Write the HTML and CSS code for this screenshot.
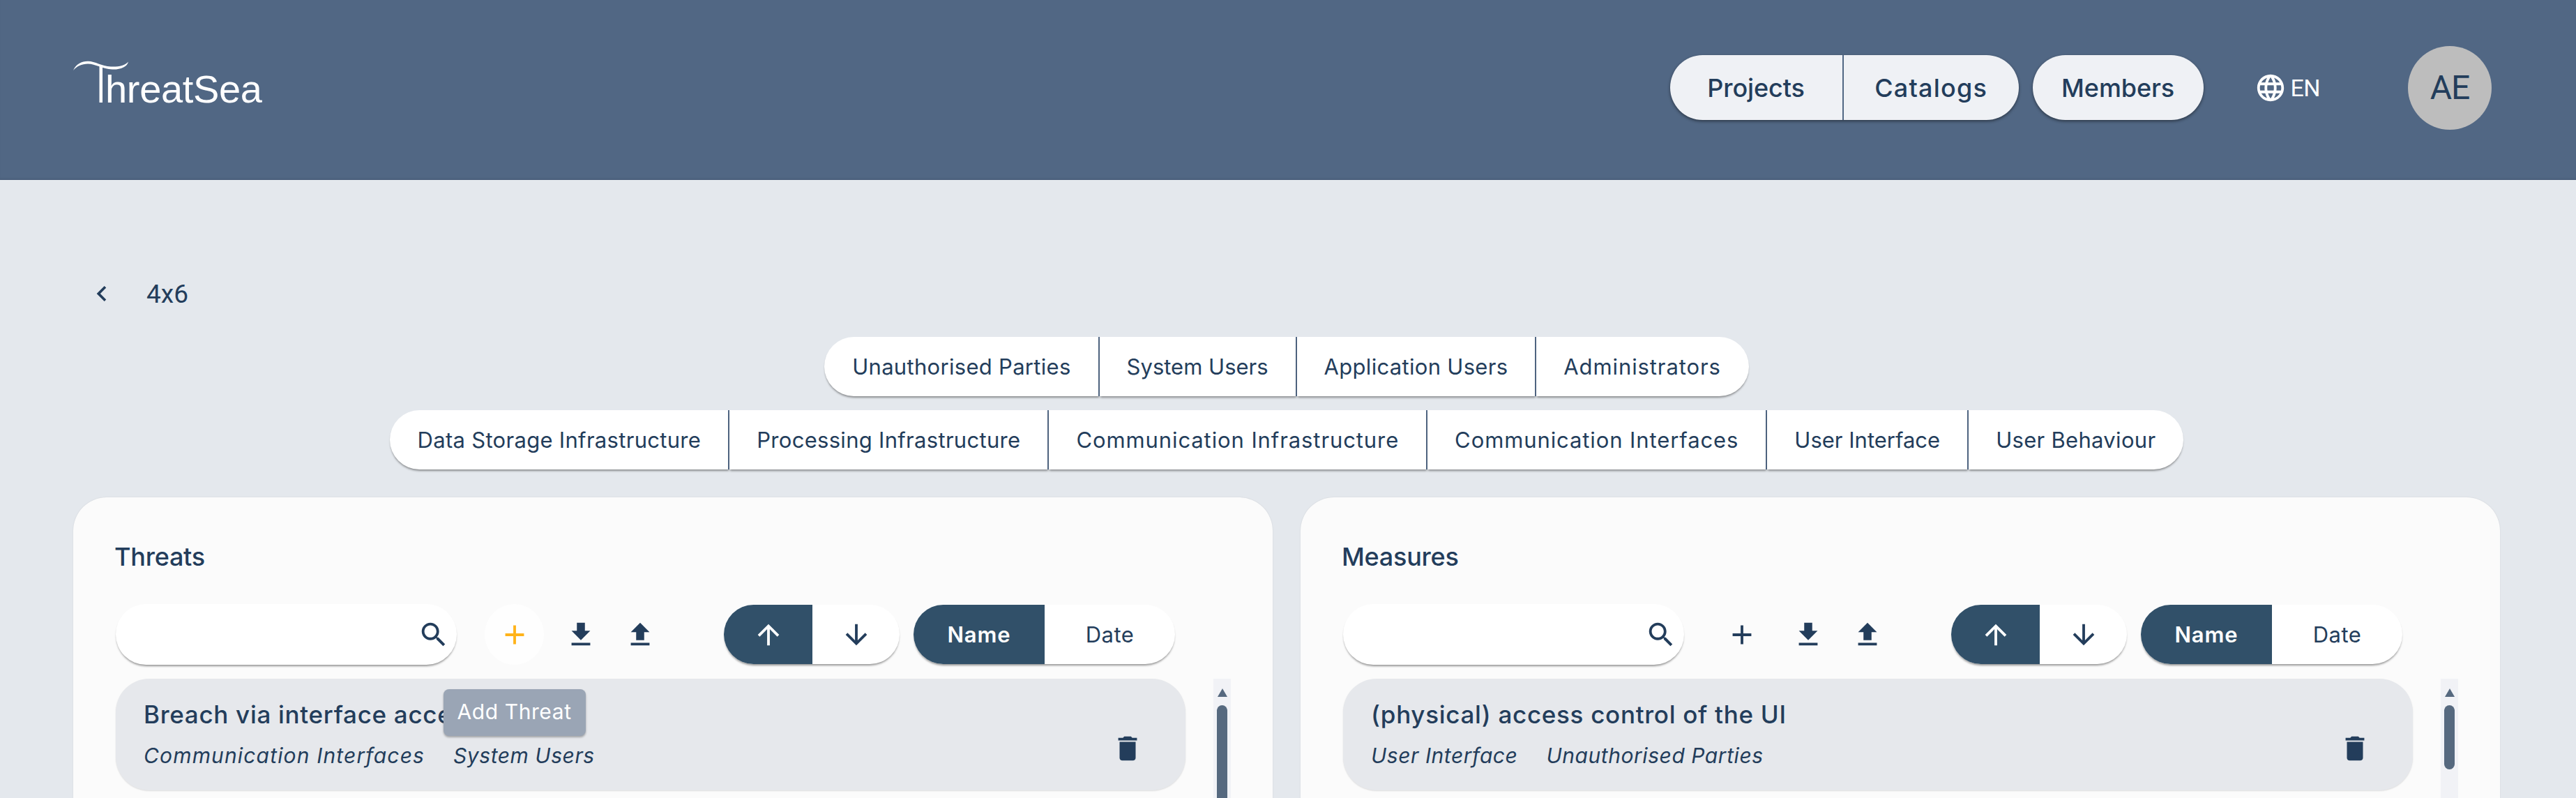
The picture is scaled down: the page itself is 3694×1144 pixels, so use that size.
FILE: index.html
```html
<!DOCTYPE html>
<html lang="en">
<head>
<meta charset="utf-8">
<title>ThreatSea</title>
<link rel="stylesheet" href="styles.css">
</head>
<body>
<svg class="sprite" aria-hidden="true">
  <symbol id="i-search" viewBox="0 0 24 24"><path d="M15.5 14h-.79l-.28-.27C15.41 12.59 16 11.11 16 9.5 16 5.91 13.09 3 9.5 3S3 5.91 3 9.5 5.91 16 9.5 16c1.61 0 3.09-.59 4.23-1.57l.27.28v.79l5 4.99L20.49 19l-4.99-5zm-6 0C7.01 14 5 11.99 5 9.5S7.01 5 9.5 5 14 7.01 14 9.5 11.99 14 9.5 14z"/></symbol>
  <symbol id="i-add" viewBox="0 0 24 24"><path d="M19 13h-6v6h-2v-6H5v-2h6V5h2v6h6v2z"/></symbol>
  <symbol id="i-down" viewBox="0 0 24 24"><path d="M19 9h-4V3H9v6H5l7 7 7-7zM5 18v2h14v-2H5z"/></symbol>
  <symbol id="i-up" viewBox="0 0 24 24"><path d="M9 16h6v-6h4l-7-7-7 7h4zm-4 2h14v2H5z"/></symbol>
  <symbol id="i-arrow-up" viewBox="0 0 24 24"><path d="M4 12l1.41 1.41L11 7.83V20h2V7.83l5.58 5.59L20 12l-8-8-8 8z"/></symbol>
  <symbol id="i-arrow-down" viewBox="0 0 24 24"><path d="M20 12l-1.41-1.41L13 16.17V4h-2v12.17l-5.58-5.59L4 12l8 8 8-8z"/></symbol>
  <symbol id="i-trash" viewBox="0 0 24 24"><path d="M6 19c0 1.1.9 2 2 2h8c1.1 0 2-.9 2-2V7H6v12zM19 4h-3.5l-1-1h-5l-1 1H5v2h14V4z"/></symbol>
  <symbol id="i-chevron" viewBox="0 0 24 24"><path d="M15.41 7.41 14 6l-6 6 6 6 1.41-1.41L10.83 12z"/></symbol>
  <symbol id="i-globe" viewBox="0 0 24 24"><path d="M11.99 2C6.47 2 2 6.48 2 12s4.47 10 9.99 10C17.52 22 22 17.52 22 12S17.52 2 11.99 2zm6.93 6h-2.95c-.32-1.25-.78-2.45-1.38-3.56 1.84.63 3.37 1.91 4.33 3.56zM12 4.04c.83 1.2 1.48 2.53 1.91 3.96h-3.82c.43-1.43 1.08-2.76 1.91-3.96zM4.26 14C4.1 13.36 4 12.69 4 12s.1-1.36.26-2h3.38c-.08.66-.14 1.32-.14 2 0 .68.06 1.34.14 2H4.26zm.82 2h2.95c.32 1.25.78 2.45 1.38 3.56-1.84-.63-3.37-1.9-4.33-3.56zm2.95-8H5.08c.96-1.66 2.49-2.93 4.33-3.56C8.81 5.55 8.35 6.75 8.03 8zM12 19.96c-.83-1.2-1.48-2.53-1.91-3.96h3.82c-.43 1.43-1.08 2.76-1.91 3.96zM14.34 14H9.66c-.09-.66-.16-1.32-.16-2 0-.68.07-1.35.16-2h4.68c.09.65.16 1.32.16 2 0 .68-.07 1.34-.16 2zm.25 5.56c.6-1.11 1.06-2.31 1.38-3.56h2.95c-.96 1.65-2.49 2.93-4.33 3.56zM16.36 14c.08-.66.14-1.32.14-2 0-.68-.06-1.34-.14-2h3.38c.16.64.26 1.31.26 2s-.1 1.36-.26 2h-3.38z"/></symbol>
</svg>

<header class="topbar">
  <svg class="logo" viewBox="0 0 285 76" role="img" aria-label="ThreatSea">
    <path class="logo-mark" d="M0 15C4 6 12 1.8 21 1.8C32 1.8 40 9 54 9.5C65 10 74 8 79 2.5C77 10.5 67 14 56 13.5C42 13 32 5.5 21 5.5C12 5.5 5 9 0 15Z"/>
    <rect class="logo-mark" x="37.5" y="8" width="4.5" height="53"/>
    <text class="logo-text" x="46" y="60.7" textLength="225" lengthAdjust="spacing">hreatSea</text>
  </svg>
  <nav class="topnav">
    <div class="navgroup">
      <a class="navlink navlink-projects">Projects</a>
      <a class="navlink navlink-catalogs">Catalogs</a>
    </div>
    <div class="navgroup">
      <a class="navlink navlink-members">Members</a>
    </div>
    <div class="lang">
      <svg class="icon-globe"><use href="#i-globe"/></svg>
      <span>EN</span>
    </div>
    <div class="avatar">AE</div>
  </nav>
</header>

<main class="page">
  <div class="crumb">
    <svg class="icon-chevron"><use href="#i-chevron"/></svg>
    <span class="crumb-title">4x6</span>
  </div>

  <div class="tabrow tabrow-first">
    <button class="tab">Unauthorised Parties</button>
    <button class="tab tab-tight">System Users</button>
    <button class="tab">Application Users</button>
    <button class="tab tab-wide">Administrators</button>
  </div>
  <div class="tabrow">
    <button class="tab">Data Storage Infrastructure</button>
    <button class="tab">Processing Infrastructure</button>
    <button class="tab tab-wide">Communication Infrastructure</button>
    <button class="tab tab-wide">Communication Interfaces</button>
    <button class="tab tab-tight">User Interface</button>
    <button class="tab">User Behaviour</button>
  </div>

  <div class="panels">
    <section class="panel">
      <h2 class="panel-title">Threats</h2>
      <div class="toolbar">
        <div class="search"><svg class="icon"><use href="#i-search"/></svg></div>
        <div class="iconbtn iconbtn-add iconbtn-hover">
          <svg class="icon icon-add"><use href="#i-add"/></svg>
          <div class="tooltip">Add Threat</div>
        </div>
        <div class="iconbtn iconbtn-first"><svg class="icon"><use href="#i-down"/></svg></div>
        <div class="iconbtn"><svg class="icon"><use href="#i-up"/></svg></div>
        <div class="toggle toggle-dir">
          <div class="seg seg-up active"><svg class="icon"><use href="#i-arrow-up"/></svg></div>
          <div class="seg seg-down"><svg class="icon"><use href="#i-arrow-down"/></svg></div>
        </div>
        <div class="toggle">
          <div class="seg seg-name active">Name</div>
          <div class="seg seg-date">Date</div>
        </div>
      </div>
      <div class="listwrap">
        <div class="list">
          <article class="item">
            <div class="item-body">
              <div class="item-title">Breach via interface access</div>
              <div class="item-meta"><span class="meta-wide">Communication Interfaces</span><span>System Users</span></div>
            </div>
            <svg class="icon"><use href="#i-trash"/></svg>
          </article>
        </div>
        <div class="scroll">
          <div class="scroll-arrow"></div>
          <div class="scroll-thumb scroll-thumb-long"></div>
        </div>
      </div>
    </section>

    <section class="panel">
      <h2 class="panel-title">Measures</h2>
      <div class="toolbar">
        <div class="search"><svg class="icon"><use href="#i-search"/></svg></div>
        <div class="iconbtn iconbtn-add"><svg class="icon"><use href="#i-add"/></svg></div>
        <div class="iconbtn iconbtn-first"><svg class="icon"><use href="#i-down"/></svg></div>
        <div class="iconbtn"><svg class="icon"><use href="#i-up"/></svg></div>
        <div class="toggle toggle-dir">
          <div class="seg seg-up active"><svg class="icon"><use href="#i-arrow-up"/></svg></div>
          <div class="seg seg-down"><svg class="icon"><use href="#i-arrow-down"/></svg></div>
        </div>
        <div class="toggle">
          <div class="seg seg-name active">Name</div>
          <div class="seg seg-date">Date</div>
        </div>
      </div>
      <div class="listwrap">
        <div class="list">
          <article class="item">
            <div class="item-body">
              <div class="item-title">(physical) access control of the UI</div>
              <div class="item-meta"><span>User Interface</span><span>Unauthorised Parties</span></div>
            </div>
            <svg class="icon"><use href="#i-trash"/></svg>
          </article>
        </div>
        <div class="scroll">
          <div class="scroll-arrow"></div>
          <div class="scroll-thumb"></div>
        </div>
      </div>
    </section>
  </div>
</main>
</body>
</html>
```
FILE: styles.css
```css
* { box-sizing: border-box; }
html, body { margin: 0; height: 1144px; overflow: hidden; }
body {
  background: #e4e8ed;
  color: #233d5b;
  font-family: "Inter", "Noto Sans", sans-serif;
}
.sprite { width: 0; height: 0; position: absolute; }
svg { fill: currentColor; display: block; }

.topbar {
  height: 258px;
  background: #516784;
  padding: 0 121px 7px 105px;
  display: flex;
  align-items: center;
  justify-content: space-between;
  box-shadow: inset 0 -3px 3px -2px rgba(30, 45, 70, .25);
}
.logo { width: 285px; height: 76px; margin-bottom: 3px; }
.logo-mark { fill: #fff; }
.logo-text { fill: #fff; font: 400 56px "Liberation Sans", sans-serif; }

.topnav { display: flex; align-items: center; }
.navgroup {
  display: flex;
  height: 93px;
  margin-right: 20px;
  background: #eff1f5;
  border-radius: 47px;
  box-shadow: 0 2px 4px rgba(0, 0, 0, .45);
  overflow: hidden;
}
.navlink {
  display: flex;
  align-items: center;
  justify-content: center;
  font-size: 36px;
  font-weight: 500;
  letter-spacing: -.1px;
}
.navlink-projects { width: 249px; border-right: 2px solid #516784; }
.navlink-catalogs { width: 251px; letter-spacing: 1.2px; }
.navlink-members { width: 245px; }
.lang {
  display: flex;
  align-items: center;
  gap: 6px;
  margin-left: 53px;
  color: #fff;
  font: 400 34px "Roboto", sans-serif;
  letter-spacing: -.6px;
}
.icon-globe { width: 46px; height: 46px; }
.avatar {
  width: 120px;
  height: 120px;
  margin-left: 126px;
  border-radius: 50%;
  background: #bdbdbd;
  display: flex;
  align-items: center;
  justify-content: center;
  font: 400 48px "Roboto", sans-serif;
  letter-spacing: -1.1px;
}

.page { padding: 141px 109px 0 105px; }
.crumb { display: flex; align-items: center; gap: 42px; padding-left: 19px; height: 44px; }
.icon-chevron { width: 44px; height: 44px; }
.crumb-title { font: 400 37px "Roboto", sans-serif; }

.tabrow { display: flex; justify-content: center; margin-top: 20px; }
.tabrow-first { margin-top: 40px; }
.tab {
  height: 85px;
  padding: 0 39px;
  background: #fff;
  border: 0;
  border-right: 2px solid #516784;
  color: #233d5b;
  font-family: inherit;
  font-size: 31px;
  letter-spacing: .3px;
  box-shadow: 0 3px 3px -1px rgba(0, 0, 0, .4);
}
.tab-wide { letter-spacing: .9px; }
.tab-tight { letter-spacing: 0; }
.tab:first-child { padding-left: 40px; border-radius: 43px 0 0 43px; }
.tab:last-child { padding-right: 40px; border-right: 0; border-radius: 0 43px 43px 0; }

.panels { display: flex; gap: 40px; margin-top: 40px; }
.panel {
  flex: 1 1 0;
  min-height: 700px;
  padding: 60px 60px 0 61px;
  background: #fbfbfb;
  border-radius: 48px;
  box-shadow: 0 0 2px rgba(0, 0, 0, .1);
}
.panel-title {
  margin: 0 0 0 -2px;
  font-size: 36px;
  font-weight: 500;
  line-height: 50px;
  letter-spacing: -.25px;
}

.toolbar { display: flex; align-items: center; height: 87px; margin-top: 43px; }
.icon { width: 46px; height: 46px; }
.search {
  width: 489px;
  height: 87px;
  padding-right: 10px;
  display: flex;
  align-items: center;
  justify-content: flex-end;
  background: #fff;
  border-radius: 44px;
  box-shadow: 0 3px 3px -1px rgba(0, 0, 0, .4);
}
.iconbtn {
  width: 85px;
  height: 87px;
  display: flex;
  align-items: center;
  justify-content: center;
  position: relative;
}
.iconbtn-add { margin-left: 40px; }
.iconbtn-hover { background: #fefefe; border-radius: 50%; }
.iconbtn-first { margin-left: 10px; }
.icon-add { color: #233d5b; }
.iconbtn-hover .icon-add { color: #ffb31a; }
.tooltip {
  position: absolute;
  top: 122px;
  left: 50%;
  transform: translateX(-50%);
  z-index: 2;
  width: 204px;
  height: 67px;
  display: flex;
  align-items: center;
  justify-content: center;
  padding-bottom: 4px;
  background: #9aa5b5;
  border-radius: 8px;
  box-shadow: 0 2px 3px rgba(0, 0, 0, .3);
  color: #fff;
  font-size: 30px;
  letter-spacing: .6px;
  white-space: nowrap;
}
.toggle {
  display: flex;
  height: 85px;
  margin-left: 20px;
  background: #fff;
  border-radius: 43px;
  box-shadow: 0 3px 3px -1px rgba(0, 0, 0, .4);
  overflow: hidden;
}
.toggle-dir { margin-left: 78px; }
.seg {
  display: flex;
  align-items: center;
  justify-content: center;
  font-size: 31px;
  letter-spacing: .4px;
}
.seg.active { background: #315069; color: #fff; }
.seg-up { width: 127px; }
.seg-down { width: 125px; }
.seg-name { width: 188px; font-weight: 600; letter-spacing: .9px; }
.seg-date { width: 187px; }

.listwrap { display: flex; gap: 40px; margin-top: 20px; min-height: 400px; }
.list { width: 1534px; }
.item {
  height: 160px;
  padding: 26px 60px 37px 40px;
  display: flex;
  justify-content: space-between;
  align-items: flex-end;
  background: #e6e8ec;
  border-radius: 48px;
  box-shadow: 0 1px 2px rgba(0, 0, 0, .12);
}
.item-body { align-self: flex-start; }
.item-title { font-size: 35px; font-weight: 500; line-height: 50px; letter-spacing: .7px; white-space: nowrap; }
.item-meta {
  display: flex;
  gap: 41px;
  margin-top: 14px;
  font-size: 30px;
  font-style: italic;
  line-height: 40px;
  letter-spacing: .55px;
}
.meta-wide { letter-spacing: 1.15px; }
.scroll {
  width: 25px;
  padding-top: 14px;
  display: flex;
  flex-direction: column;
  align-items: center;
  background: #f1f2f6;
}
.scroll-arrow {
  width: 0;
  height: 0;
  border-left: 7.5px solid transparent;
  border-right: 7.5px solid transparent;
  border-bottom: 12px solid #56697f;
}
.scroll-thumb {
  width: 15px;
  height: 92px;
  margin-top: 12px;
  background: #56697f;
  border-radius: 8px;
}
.scroll-thumb-long { height: 300px; }
```
